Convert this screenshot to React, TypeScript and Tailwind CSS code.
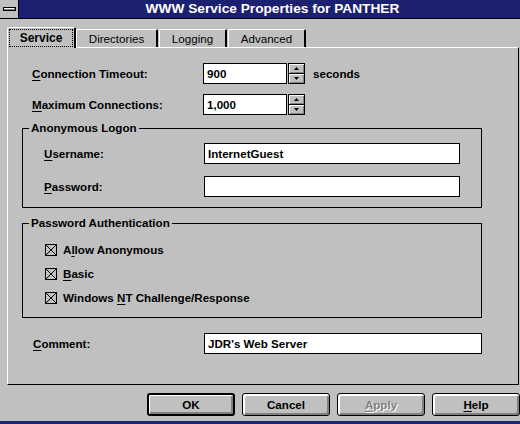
import React from 'react';

const font = { fontFamily: '"Liberation Sans", Arial, sans-serif' };

function Key({ children }: { children: React.ReactNode }) {
  return <span className="underline underline-offset-[2px] decoration-[1px]">{children}</span>;
}

function TextBox({ value, width }: { value?: string; width: string }) {
  return (
    <div className={`${width} h-[21px] border border-black bg-white flex items-center px-[3px] text-[11.6px] font-bold text-black`}>
      {value}
    </div>
  );
}

function SpinHalf({ up }: { up?: boolean }) {
  return (
    <div className="flex-1 border border-black bg-[#c0c0c0] shadow-[inset_1px_1px_0_#fff,inset_-1px_-1px_0_#808080] flex items-center justify-center">
      <svg width="5" height="3" viewBox="0 0 5 3">
        {up ? <path d="M2.5 0 L5 3 L0 3 Z" fill="#000" /> : <path d="M0 0 L5 0 L2.5 3 Z" fill="#000" />}
      </svg>
    </div>
  );
}

function Spinner() {
  return (
    <div className="w-[17px] h-[21px] flex flex-col ml-[1px] -space-y-[1px]">
      <SpinHalf up />
      <SpinHalf />
    </div>
  );
}

function Check({ children }: { children: React.ReactNode }) {
  return (
    <div className="flex items-center h-[14px]">
      <svg width="12" height="12" viewBox="0 0 12 12" className="shrink-0">
        <rect x="0.5" y="0.5" width="11" height="11" fill="none" stroke="#000" />
        <path d="M1 1 L11 11 M11 1 L1 11" stroke="#000" strokeWidth="1" />
      </svg>
      <span className="ml-[6px] text-[11.6px] font-bold">{children}</span>
    </div>
  );
}

function Group({ title, className, children }: { title: string; className: string; children: React.ReactNode }) {
  return (
    <div className={`relative border border-black ${className}`}>
      <span className="absolute -top-[8px] left-[6px] px-[2px] bg-[#c0c0c0] text-[11.6px] font-bold leading-[14px]">
        {title}
      </span>
      {children}
    </div>
  );
}

function Button({ children, isDefault, disabled }: { children: React.ReactNode; isDefault?: boolean; disabled?: boolean }) {
  return (
    <div
      className={`w-[88px] h-[23px] rounded-[3px] border-black bg-[#c0c0c0] flex items-center justify-center text-[11.6px] font-bold ${
        isDefault ? 'border-2 shadow-[inset_1px_1px_0_#fff,inset_-2px_-2px_0_#808080]' : 'border shadow-[inset_2px_2px_0_#fff,inset_-2px_-2px_0_#808080]'
      } ${disabled ? 'text-[#808080] [text-shadow:1px_1px_0_#fff]' : 'text-black'}`}
    >
      {children}
    </div>
  );
}

const tabs = [
  { name: 'Service', w: 'w-[69px]', ml: '' },
  { name: 'Directories', w: 'w-[82px]', ml: '' },
  { name: 'Logging', w: 'w-[68px]', ml: 'ml-[1px]' },
  { name: 'Advanced', w: 'w-[78px]', ml: 'ml-[1px]' },
];

export default function App() {
  return (
    <div className="w-[520px] h-[424px] bg-[#c0c0c0] flex flex-col text-black overflow-hidden" style={font}>
      {/* Title bar */}
      <div className="h-[19px] flex border-b border-black bg-[#1c2070]">
        <div className="w-[19px] bg-[#c0c0c0] border-r border-black flex items-center justify-center">
          <div className="w-[13px] h-[4px] border border-black bg-white shadow-[inset_-1px_-1px_0_#808080]" />
        </div>
        <div className="flex-1 flex items-center justify-center text-white font-bold text-[13.7px] pl-[6px]">
          WWW Service Properties for PANTHER
        </div>
      </div>

      {/* Tabs */}
      <div className="h-[28px] flex items-end pl-[7px]">
        {tabs.map((t, i) =>
          i === 0 ? (
            <div
              key={t.name}
              className={`relative z-10 -mb-[1px] h-[21px] ${t.w} border-t border-l border-white border-r-2 border-r-black rounded-tl-[2px] rounded-tr-[2px] bg-[#c0c0c0] p-[1px]`}
            >
              <div className="h-full border border-dotted border-black flex items-center justify-center text-[12px] font-bold">
                {t.name}
              </div>
            </div>
          ) : (
            <div
              key={t.name}
              className={`h-[18px] ${t.w} ${t.ml} border-t border-l border-white border-r-2 border-r-black rounded-tl-[2px] rounded-tr-[2px] flex items-center justify-center text-[11.6px]`}
            >
              {t.name}
            </div>
          )
        )}
      </div>

      {/* Panel */}
      <div className="ml-[7px] w-[512px] h-[338px] border-t border-l border-white border-r border-b border-r-black border-b-black flex flex-col">
        <div className="mt-[15px] flex items-center pl-[24px]">
          <div className="w-[171px] text-[11.6px] font-bold">
            <Key>C</Key>onnection Timeout:
          </div>
          <TextBox value="900" width="w-[84px]" />
          <Spinner />
          <span className="ml-[8px] text-[11.6px] font-bold">seconds</span>
        </div>
        <div className="mt-[10px] flex items-center pl-[24px]">
          <div className="w-[171px] text-[11.6px] font-bold">
            <Key>M</Key>aximum Connections:
          </div>
          <TextBox value="1,000" width="w-[84px]" />
          <Spinner />
        </div>

        <Group title="Anonymous Logon" className="mt-[13px] ml-[14px] w-[460px] h-[80px] pt-[14px] pl-[21px]">
          <div className="flex items-center">
            <div className="w-[160px] text-[11.6px] font-bold">
              <Key>U</Key>sername:
            </div>
            <TextBox value="InternetGuest" width="w-[256px]" />
          </div>
          <div className="mt-[12px] flex items-center">
            <div className="w-[160px] text-[11.6px] font-bold">
              <Key>P</Key>assword:
            </div>
            <TextBox width="w-[256px]" />
          </div>
        </Group>

        <Group title="Password Authentication" className="mt-[15px] ml-[14px] w-[460px] h-[95px] pt-[19px] pl-[22px] flex flex-col gap-[10px]">
          <Check>
            A<Key>l</Key>low Anonymous
          </Check>
          <Check>
            <Key>B</Key>asic
          </Check>
          <Check>
            Windows <Key>N</Key>T Challenge/Response
          </Check>
        </Group>

        <div className="mt-[15px] flex items-center pl-[25px]">
          <div className="w-[171px] text-[11.6px] font-bold">
            <Key>C</Key>omment:
          </div>
          <TextBox value="JDR's Web Server" width="w-[278px]" />
        </div>
      </div>

      {/* Buttons */}
      <div className="mt-[8px] flex gap-[7px] pl-[147px]">
        <Button isDefault>OK</Button>
        <Button>Cancel</Button>
        <Button disabled>
          <Key>A</Key>pply
        </Button>
        <Button>
          <Key>H</Key>elp
        </Button>
      </div>

      <div className="mt-auto h-[3px] bg-[#1c2070]" />
    </div>
  );
}
